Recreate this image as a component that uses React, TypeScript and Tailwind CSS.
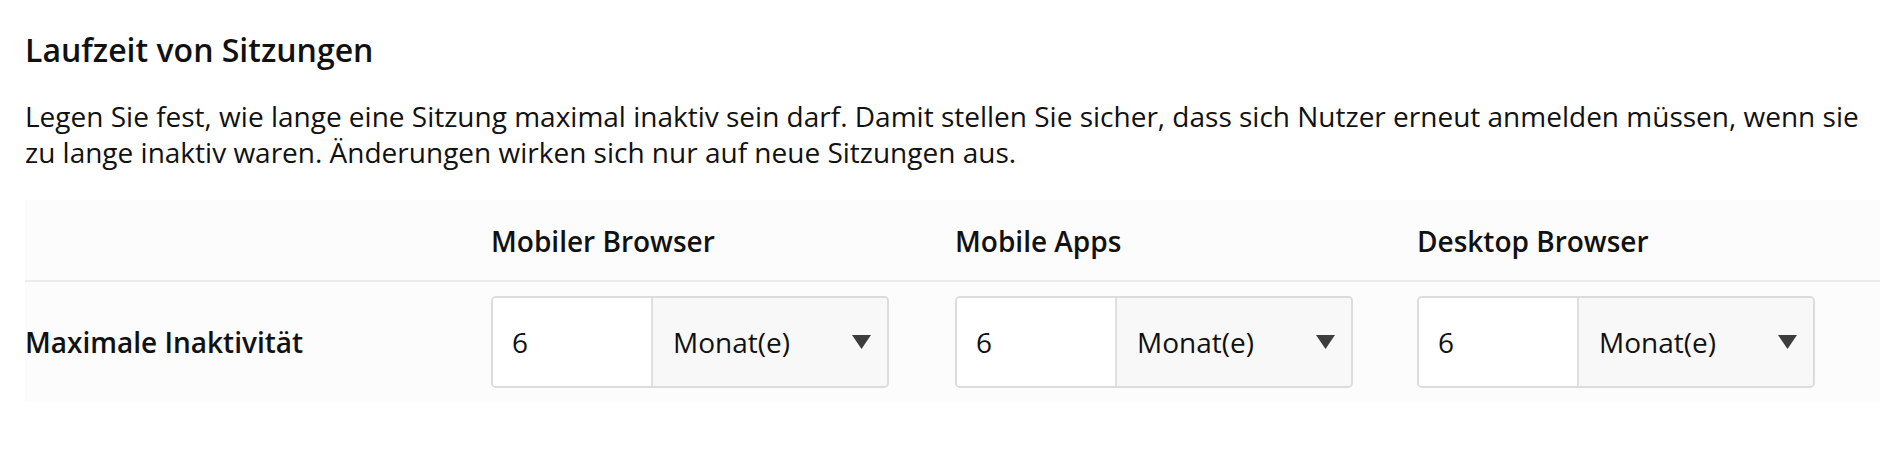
import React from "react";

const font = { fontFamily: '"Open Sans", "Noto Sans", Arial, sans-serif' };

function Arrow() {
  return (
    <svg width="19" height="14" viewBox="0 0 19 14" className="shrink-0">
      <polygon points="0,0 19,0 9.5,14" fill="#3d3d3d" />
    </svg>
  );
}

function DurationInput() {
  return (
    <div className="flex h-[92px] w-[398px] overflow-hidden rounded-[5px] border-2 border-[#dcdcdc]">
      <div className="flex w-[158px] items-center bg-white pl-[19px] text-[28px] text-[#111]">6</div>
      <div className="flex flex-1 items-center justify-between border-l-2 border-[#e0e0e0] bg-[#f8f8f8] pl-[20px] pr-[16px] text-[28px] text-[#111]">
        <span>Monat(e)</span>
        <Arrow />
      </div>
    </div>
  );
}

export default function App() {
  const cols = ["Mobiler Browser", "Mobile Apps", "Desktop Browser"];
  return (
    <div className="h-[458px] w-full bg-white pl-[25px] pr-[24px] pt-[30px] text-[#111]" style={font}>
      <h2 className="text-[32px] font-semibold leading-[40px]">Laufzeit von Sitzungen</h2>
      <p className="mt-[28px] text-[28px] leading-[36px]">
        Legen Sie fest, wie lange eine Sitzung maximal inaktiv sein darf. Damit stellen Sie sicher, dass sich Nutzer erneut anmelden müssen, wenn sie zu lange inaktiv waren. Änderungen wirken sich nur auf neue Sitzungen aus.
      </p>
      <div className="mt-[30px] bg-[#fcfcfc]">
        <div className="grid grid-cols-[466px_464px_462px_1fr] border-b-2 border-[#ececec] pt-[23px] pb-[21px]">
          <div />
          {cols.map((c) => (
            <div key={c} className="text-[28px] font-semibold leading-[36px]">{c}</div>
          ))}
        </div>
        <div className="grid grid-cols-[466px_464px_462px_1fr] items-center pt-[14px] pb-[14px]">
          <div className="text-[28px] font-semibold leading-[36px]">Maximale Inaktivität</div>
          <DurationInput />
          <DurationInput />
          <DurationInput />
        </div>
      </div>
    </div>
  );
}
